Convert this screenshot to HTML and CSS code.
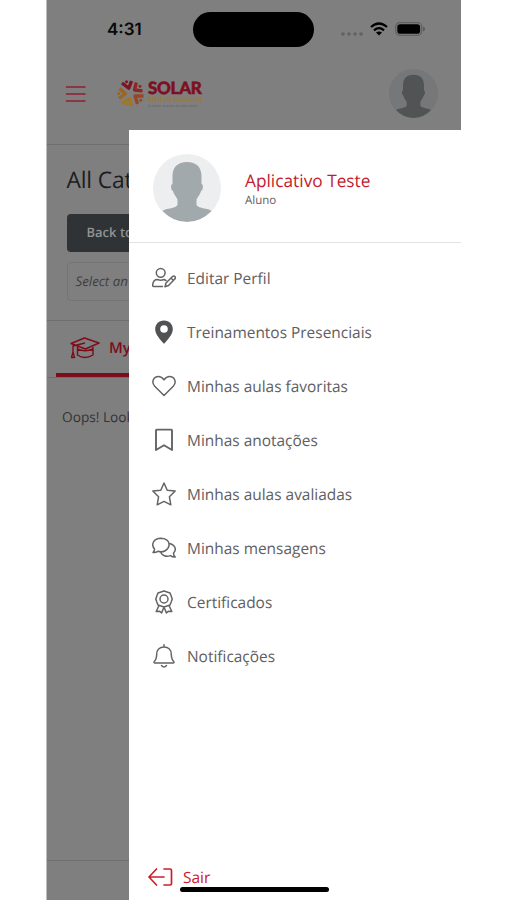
FILE: index.html
```html
<!DOCTYPE html>
<html lang="pt-BR">
<head>
<meta charset="utf-8">
<meta name="viewport" content="width=device-width, initial-scale=1">
<title>Solar</title>
<link rel="stylesheet" href="styles.css">
</head>
<body>
<svg class="defs" width="0" height="0" aria-hidden="true">
  <symbol id="person" viewBox="0 0 68 68">
    <path d="M34 8C24.500 8 19.500 13.500 19.500 22V30C17.500 30 17.500 36 20 37C21 41 23.500 43 24.500 45.500V51C22 55 13 54 9.500 57Q20 68 34 68T58.500 57C55 54 46 55 43.500 51V45.500C44.500 43 47 41 48 37C50.500 36 50.500 30 48.500 30V22C48.500 13.500 43.500 8 34 8Z"/>
  </symbol>
</svg>
<div class="phone">
  <div class="status">
    <span class="time">4:31</span>
    <span class="island"></span>
    <span class="signals">
      <svg class="dots" width="22" height="4" viewBox="0 0 22 4"><circle cx="2" cy="2" r="1.800"/><circle cx="8" cy="2" r="1.800"/><circle cx="14" cy="2" r="1.800"/><circle cx="20" cy="2" r="1.800"/></svg>
      <svg class="wifi" width="18" height="14" viewBox="0 0 18 14"><path d="M1 5Q9-2 17 5M4 8.300Q9 4 14 8.300"/><path class="fill" d="M6 10.600Q9 8.200 12 10.600L9 13.500Z"/></svg>
      <svg class="battery" width="30" height="14" viewBox="0 0 30 14"><rect class="shell" x=".7" y=".7" width="26" height="12.600" rx="4"/><rect x="2.300" y="2.300" width="22.800" height="9.400" rx="2.800"/><path class="tip" d="M28.200 4.600Q30 5.500 30 7T28.200 9.400Z"/></svg>
    </span>
  </div>
  <header class="header">
    <svg class="burger" width="20" height="18" viewBox="0 0 20 18"><path d="M0 2H19.500M0 9H19.500M0 16H19.500"/></svg>
    <div class="brand">
      <svg class="mark" width="29" height="29" viewBox="0 0 29 29">
        <g class="m-dark"><path d="M6 4L12.800 9.300L15.500 2"/><circle cx="10.500" cy="2.800" r="1.500"/></g>
        <g class="m-red"><path d="M20.300 3.500L18.500 11L26.500 11.800"/><circle cx="24" cy="7.300" r="1.500"/></g>
        <g class="m-orange"><path d="M27.500 17L19 17L21.500 25"/><circle cx="24.700" cy="21.300" r="1.500"/></g>
        <g class="m-amber"><path d="M15.500 27L13.300 19.800L6 24.500"/><circle cx="11.200" cy="25.600" r="1.500"/></g>
        <g class="m-gold"><path d="M3 19.500L9.300 14.800L3.500 9.500"/><circle cx="2.600" cy="14.500" r="1.500"/></g>
      </svg>
      <div class="words">
        <span class="name">SOLAR</span>
        <span class="sub">REDE DE COLÉGIOS</span>
        <span class="tag">A maior escola da educação</span>
      </div>
    </div>
    <svg class="avatar avatar-small"><use href="#person"/></svg>
  </header>
  <main class="main">
    <section class="filters">
      <h1>All Categories</h1>
      <div class="back">Back to categories</div>
      <div class="select">Select an option</div>
    </section>
    <nav class="tabs">
      <div class="tab">
        <svg width="30" height="22" viewBox="0 0 30 22"><path d="M1 6.500L14.500 1L29 6L15.500 12ZM15 6L3 9V15M3 15L1.500 20.500H4.500L3 15M7.500 10V18Q14.500 23 23 18V10M7.500 12Q15 15.500 23 12"/></svg>
        <span>My courses</span>
      </div>
    </nav>
    <p class="empty">Oops! Looks like it is empty</p>
  </main>
  <footer class="bottom"></footer>

  <aside class="drawer">
    <div class="profile">
      <svg class="avatar"><use href="#person"/></svg>
      <div class="identity"><div class="user">Aplicativo Teste</div><div class="role">Aluno</div></div>
    </div>
    <ul class="menu">
      <li><svg viewBox="0 0 24 24"><circle cx="8.700" cy="6.800" r="4.400"/><path d="M10.500 20.500H1.500Q.6 20.500.7 19Q1 13.500 5.500 13.500Q8.700 15 12 13.500L14 14.500M13 20.700L14 17L20.500 10.500Q22 9.500 23 10.700T22.800 13L16.500 19.500ZM19 12L21.500 14.500"/></svg><span>Editar Perfil</span></li>
      <li><svg viewBox="0 0 24 24"><path class="pin" fill-rule="evenodd" d="M12 .5C6.500.5 3.200 4.500 3.200 9.200C3.200 13 5.500 16.500 11.200 23Q12 24 12.800 23C18.500 16.500 20.800 13 20.800 9.200C20.800 4.500 17.500.5 12 .5ZM12 5.200A3.800 3.800 0 1 1 12 12.800A3.800 3.800 0 0 1 12 5.200Z"/></svg><span>Treinamentos Presenciais</span></li>
      <li><svg viewBox="0 0 24 24"><path d="M12 21.500L2.700 12.300C-1 8 1.500 2.500 6.500 2.500Q9.500 2.500 12 5.800Q14.500 2.500 17.500 2.500C22.500 2.500 25 8 21.300 12.300Z"/></svg><span>Minhas aulas favoritas</span></li>
      <li><svg viewBox="0 0 24 24"><path class="bold" d="M4 22V2.200Q4 1.600 4.600 1.600H19.400Q20 1.600 20 2.200V22L12 17.300Z"/></svg><span>Minhas anotações</span></li>
      <li><svg viewBox="0 0 24 24"><path d="M12 1L15.200 8.300L23.200 9L17.400 14.700L18.800 22.800L12 19.400L5.200 22.800L6.600 14.700L.8 9L8.800 8.300Z"/></svg><span>Minhas aulas avaliadas</span></li>
      <li><svg viewBox="0 0 24 24"><path d="M1 16.500Q2.700 14.800 2.500 13C-1 9 .8 2.500 9 2.300C15 2.300 17.500 6 17 9.500C16.500 14 11 17 6 15.300Q3.500 16.800 1 16.500ZM17.200 7.500C23 8.500 25 13.500 21.500 17Q21.500 19.500 23.200 21Q20.500 21.200 18.500 19.600C14 21.200 10 19.500 8.500 16"/></svg><span>Minhas mensagens</span></li>
      <li><svg viewBox="0 0 24 24"><path d="M12 1L15 2L18 3L19.200 6L20.200 9L19.200 12L18 15L15 16L12 17L9 16L6 15L4.800 12L3.800 9L4.800 6L6 3L9 2ZM7 15.500L4.200 21.500L7.700 21.200L9.600 23L12 17L14.400 23L16.300 21.200L19.800 21.500L17 15.500"/><circle cx="12" cy="9" r="4"/></svg><span>Certificados</span></li>
      <li><svg viewBox="0 0 24 24"><path d="M12 .8V3M3 19Q1.500 19 2.200 17.500Q4.500 15.500 4.700 10.500C4.700 5.500 8 3 12 3S19.300 5.500 19.300 10.500Q19.500 15.500 21.800 17.500Q22.500 19 21 19ZM3 19H21M9.500 21.500Q12 24.500 14.500 21.500"/></svg><span>Notificações</span></li>
    </ul>
    <div class="logout">
      <svg width="25" height="20" viewBox="0 0 25 20"><path d="M16 10H1.500M8.500 2L1 10L8.500 18M16 2H22Q23.500 2 23.500 3.500V16.500Q23.500 18 22 18H16"/></svg>
      <span>Sair</span>
    </div>
  </aside>
  <div class="home"></div>
</div>
</body>
</html>
```
FILE: styles.css
```css
* { box-sizing: border-box; }
body { margin: 0; background: #fff; font-family: "Open Sans", sans-serif; color: #5f6062; overflow: hidden; text-rendering: geometricPrecision; }
svg { flex: none; fill: none; display: block; }
.defs { position: absolute; }
.phone { position: relative; display: flex; flex-direction: column; width: 415px; height: 900px; margin-left: 46px; border-left: 1px solid #bdbdbd; background: #7f7f7f; overflow: hidden; white-space: nowrap; }

.status { display: flex; align-items: center; height: 58px; padding-left: 59px; }
.time { width: 87px; padding: 1px 0 0 1px; font: 600 17px/20px Inter, sans-serif; color: #090909; }
.island { width: 121px; height: 35px; border-radius: 18px; background: #000; }
.signals { display: flex; align-items: center; margin-left: 27px; }
.dots { fill: #626262; margin-top: 10px; }
.wifi { margin-left: 7px; stroke: #000; stroke-width: 2.300; }
.wifi .fill { fill: #000; stroke: none; }
.battery { margin-left: 7px; fill: #000; }
.battery .shell { fill: none; stroke: #606060; stroke-width: 1.200; }
.battery .tip { fill: #555; }

.header { display: flex; align-items: center; height: 87px; padding: 0 23px 15px 19px; border-bottom: 1px solid #6e6e6e; }
.burger { stroke: #8e1f30; stroke-width: 1.500; }
.brand { display: flex; align-items: center; gap: 3px; margin-left: 30px; }
.mark { fill: none; stroke-width: 3.300; stroke-linejoin: round; }
.mark circle { stroke: none; }
.m-dark { stroke: #7d1422; }
.m-dark circle { fill: #7d1422; }
.m-red { stroke: #8d2828; }
.m-red circle { fill: #8d2828; }
.m-orange { stroke: #984724; }
.m-orange circle { fill: #984724; }
.m-amber { stroke: #a27620; }
.m-amber circle { fill: #a27620; }
.m-gold { stroke: #9b641f; }
.m-gold circle { fill: #9b641f; }
.words { display: flex; flex-direction: column; width: 55px; }
.name { font: 900 17px/17px Lato, sans-serif; color: #7d1020; -webkit-text-stroke: .5px #7d1020; letter-spacing: -.3px; }
.sub { font: 400 6px/7px Lato, sans-serif; color: #a07727; letter-spacing: -.05px; }
.tag { font: 400 3.900px/5px Lato, sans-serif; color: #666; letter-spacing: .1px; }
.avatar { width: 68px; height: 68px; border-radius: 50%; background: #eceeef; fill: #a2a9ac; }
.avatar-small { width: 49px; height: 49px; margin-left: auto; background: #767778; fill: #515455; }

.filters { height: 176px; padding: 17px 20px 0 19.500px; border-bottom: 1px solid #6e6e6e; }
h1 { margin: 0 0 15px; font-size: 22.800px; line-height: 36px; padding-bottom: 1px; font-weight: 400; letter-spacing: -.15px; color: #1c1d1e; }
.back { width: 374px; height: 38px; padding-left: 20px; border-radius: 4px; background: #303336; color: #909294; font-size: 13px; line-height: 37px; font-weight: 600; }
.select { height: 39px; margin-top: 10px; padding-left: 8px; border: 1px solid #747474; border-radius: 4px; color: #3f3f3f; font-size: 13.300px; line-height: 36px; font-style: italic; }
.tabs { height: 57px; padding-left: 9px; border-bottom: 1px solid #6e6e6e; }
.tab { display: flex; align-items: center; gap: 9px; width: 150px; height: 56px; padding: 2px 0 0 14px; border-bottom: 4px solid #7d0d1b; color: #7d0d1b; font-size: 15px; font-weight: 600; }
.tab svg { stroke: #7d0d1b; stroke-width: 1.400; stroke-linejoin: round; }
.empty { margin: 27px 0 0 15px; font-size: 13.700px; line-height: 25px; color: #343434; }
.bottom { height: 40px; margin-top: auto; border-top: 1px solid #6e6e6e; }

.drawer { position: absolute; left: 82px; top: 130px; right: 0; bottom: 0; display: flex; flex-direction: column; background: #fff; }
.profile { display: flex; align-items: center; gap: 24px; height: 113px; padding: 3px 0 0 24px; border-bottom: 1px solid #e3e3e3; }
.identity { padding-top: 4px; }
.user { color: #c41c2d; font-size: 17.300px; line-height: 23px; }
.role { font-size: 11.500px; line-height: 16px; }
.menu { list-style: none; margin: 8px 0 0; padding: 0; }
.menu li { display: flex; align-items: center; gap: 11px; height: 54px; padding-left: 23px; font-size: 15.450px; }
.menu svg { width: 24px; height: 24px; stroke: #636466; stroke-width: 1.500; stroke-linejoin: round; stroke-linecap: round; }
.menu .pin { fill: #515254; stroke: none; }
.menu .bold { stroke-width: 1.900; }
.logout { display: flex; align-items: center; gap: 10px; height: 30px; margin: auto 0 8px; padding-left: 19px; color: #c9202b; font-size: 15.500px; }
.logout svg { stroke: #c9202b; stroke-width: 1.700; stroke-linejoin: round; stroke-linecap: round; }
.home { position: absolute; left: 132.500px; bottom: 8px; width: 149px; height: 5px; border-radius: 3px; background: #000; }
```
